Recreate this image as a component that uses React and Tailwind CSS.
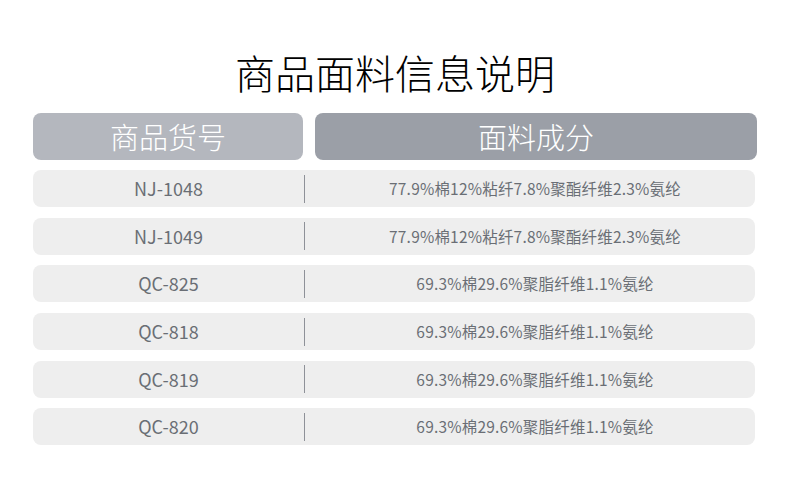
const rows = [
  { code: 'NJ-1048', fabric: '77.9%棉12%粘纤7.8%聚酯纤维2.3%氨纶' },
  { code: 'NJ-1049', fabric: '77.9%棉12%粘纤7.8%聚酯纤维2.3%氨纶' },
  { code: 'QC-825', fabric: '69.3%棉29.6%聚脂纤维1.1%氨纶' },
  { code: 'QC-818', fabric: '69.3%棉29.6%聚脂纤维1.1%氨纶' },
  { code: 'QC-819', fabric: '69.3%棉29.6%聚脂纤维1.1%氨纶' },
  { code: 'QC-820', fabric: '69.3%棉29.6%聚脂纤维1.1%氨纶' },
]

export default function App() {
  return (
    <div
      className="w-[790px] h-[500px] bg-white overflow-hidden"
      style={{ fontFamily: '"Noto Sans CJK SC", "Noto Sans", sans-serif' }}
    >
      {/* Title */}
      <h1 className="pt-[45px] h-[113px] text-center text-[40px] leading-[54px] font-light text-black">
        商品面料信息说明
      </h1>

      {/* Header */}
      <div className="flex gap-3 pl-[33px]">
        <div className="w-[270px] h-[47px] rounded-lg bg-[#b4b7be] flex items-center justify-center text-white text-[29px] font-light">
          商品货号
        </div>
        <div className="w-[442px] h-[47px] rounded-lg bg-[#9b9fa7] flex items-center justify-center text-white text-[29px] font-light">
          面料成分
        </div>
      </div>

      {/* Rows */}
      <div className="flex flex-col gap-[10.7px] pl-[33px] mt-[10px]">
        {rows.map((r) => (
          <div key={r.code} className="w-[722px] h-[37px] rounded-lg bg-[#eeeeee] flex items-center">
            <div className="w-[271px] text-center text-[18px] text-[#6a6e75]">{r.code}</div>
            <div className="w-px h-[28px] bg-[#8e9198]" />
            <div className="flex-1 pl-[10px] text-center text-[15.5px] tracking-[0.2px] text-[#6a6e75]">{r.fabric}</div>
          </div>
        ))}
      </div>
    </div>
  )
}
